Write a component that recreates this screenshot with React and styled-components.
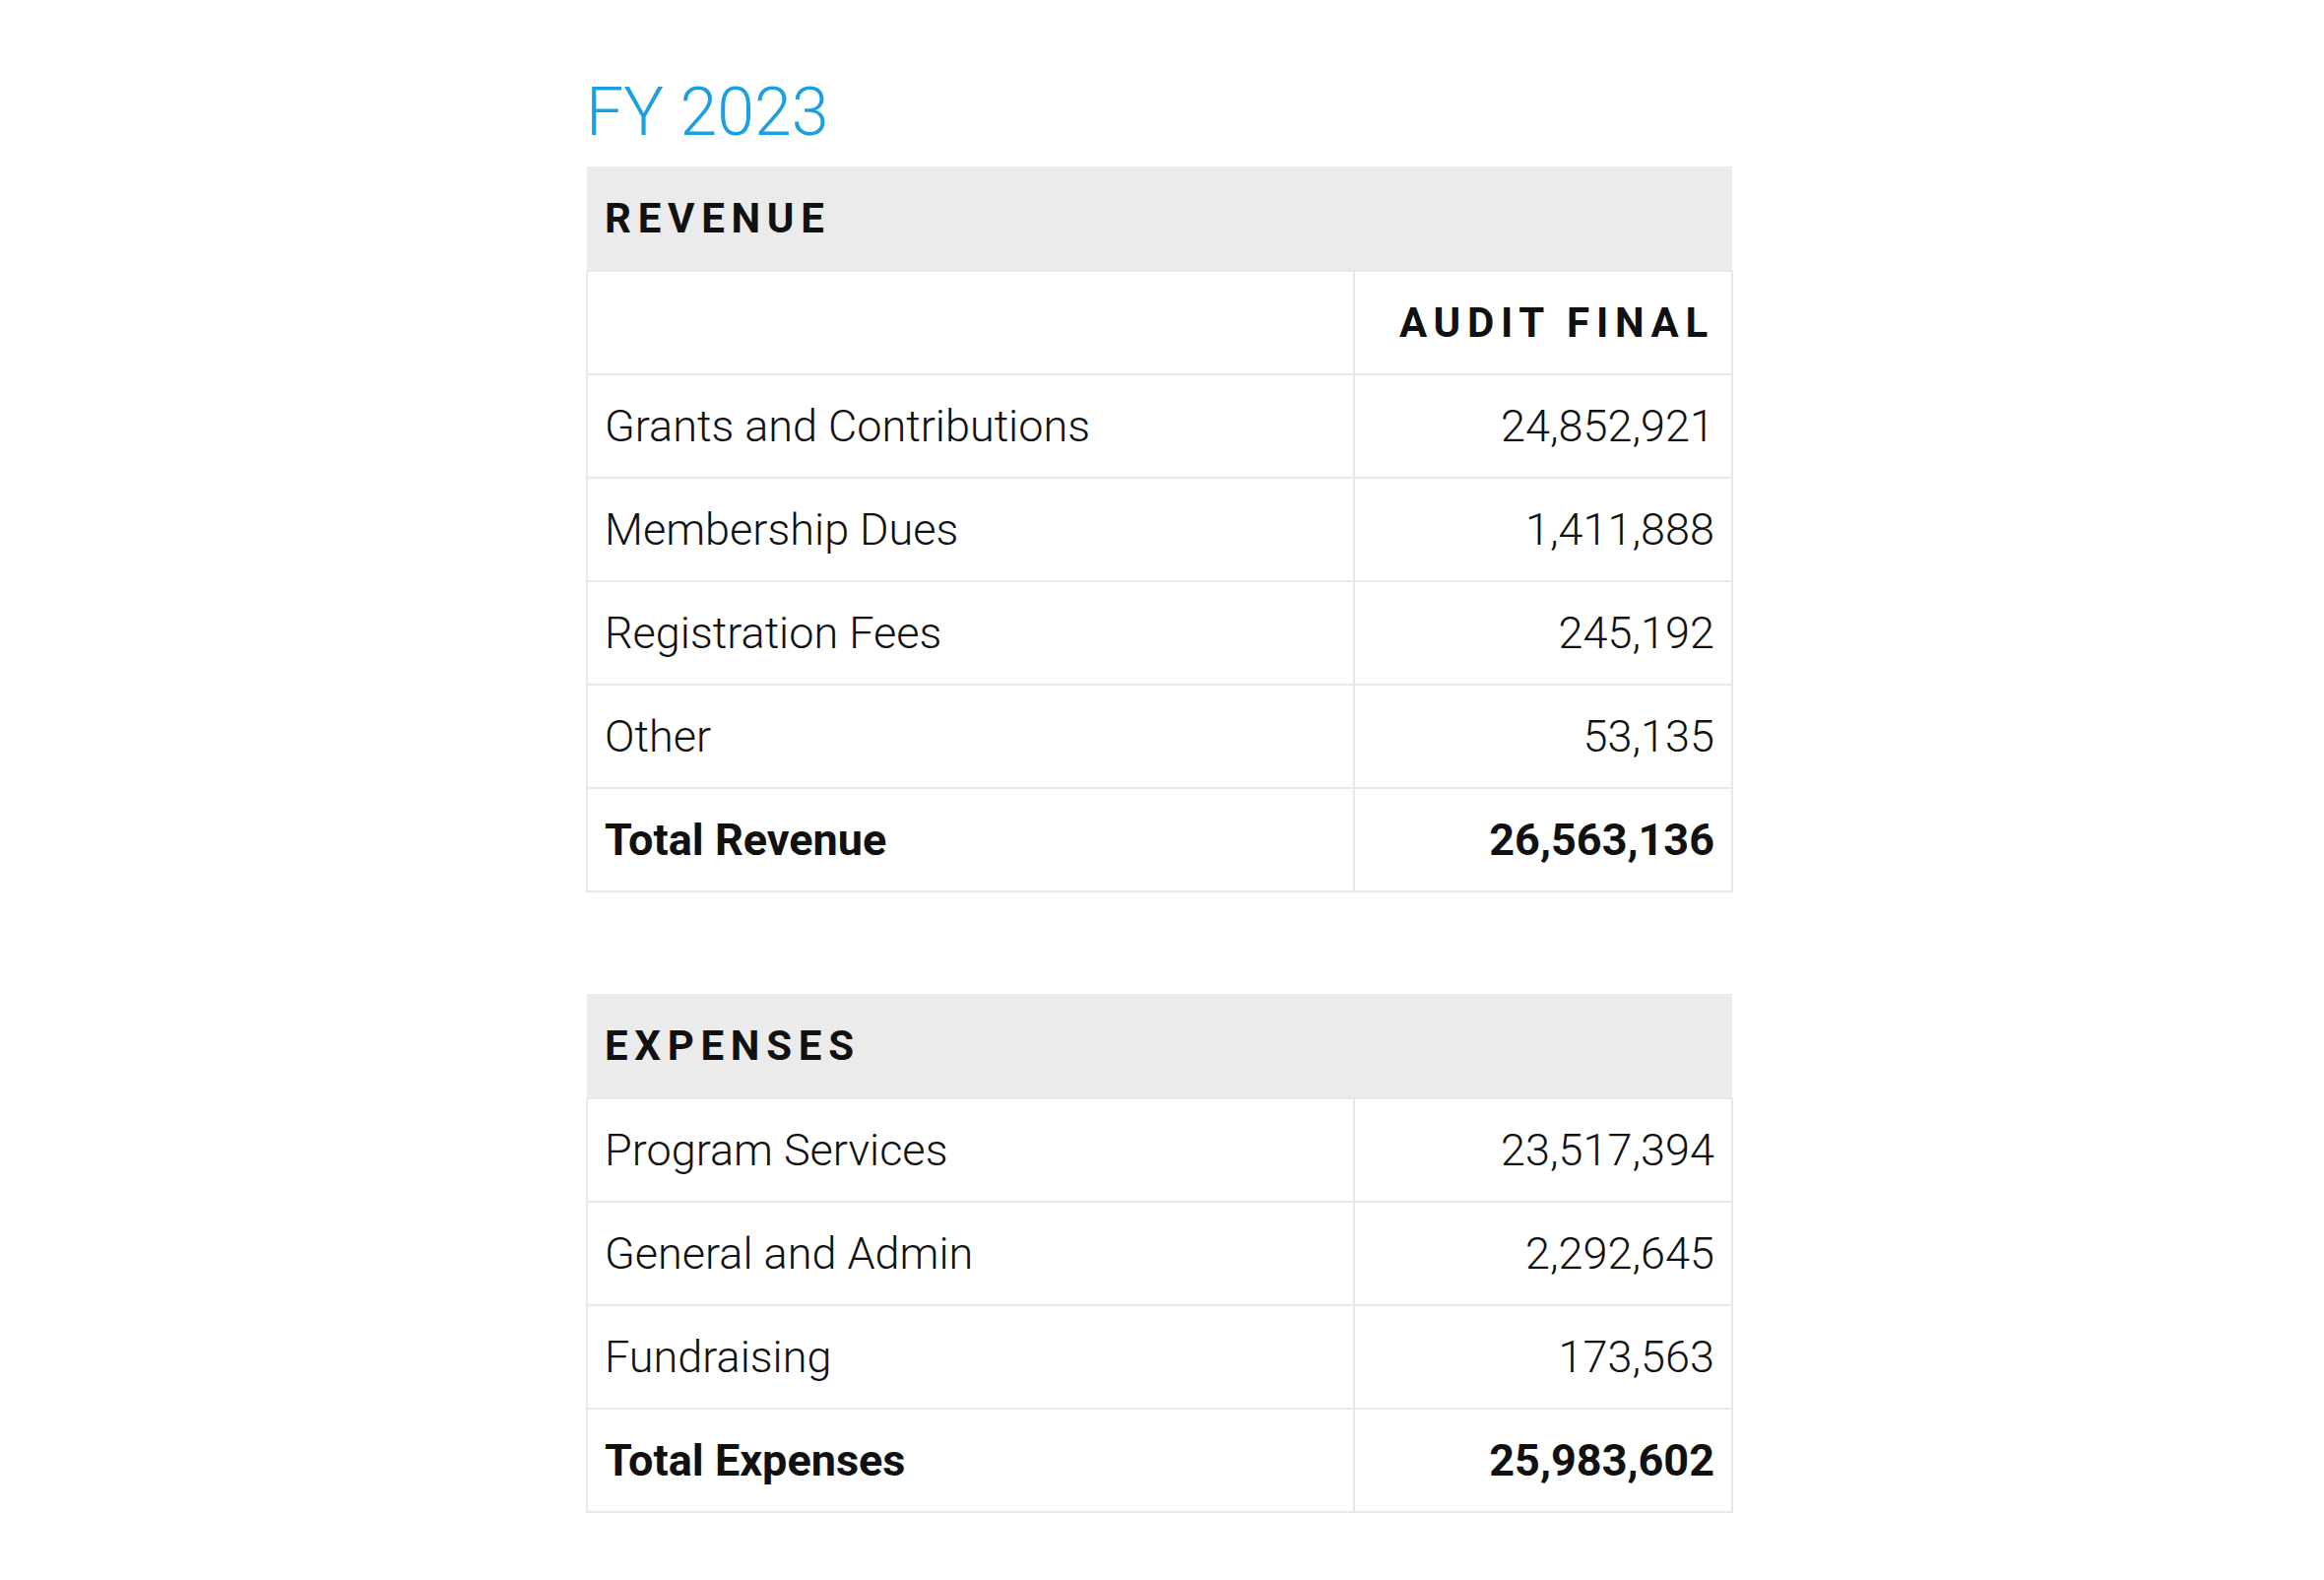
import styled, { createGlobalStyle } from 'styled-components';

const Global = createGlobalStyle`
  body {
    margin: 0;
    background: #fff;
    font-family: Roboto, "Liberation Sans", sans-serif;
  }
`;

const Page = styled.div`
  width: 1165px;
  margin-left: 595px;
  padding-top: 80px;
`;

const Title = styled.h1`
  margin: 0 0 21px;
  font-size: 68px;
  line-height: 68px;
  font-weight: 300;
  color: #1a9fe0;
`;

const Table = styled.table`
  width: 100%;
  border-collapse: collapse;
  margin-bottom: ${(p) => p.$gap || 0}px;
  table-layout: fixed;
`;

const SectionHead = styled.th`
  background: #ebebeb;
  height: 105px;
  padding: 0 18px;
  text-align: left;
  font-size: 42px;
  font-weight: 700;
  letter-spacing: 0.16em;
  color: #111;
`;

const Cell = styled.td`
  height: 103px;
  padding: 0 17px;
  border: 2px solid #e8e8e8;
  font-size: 45px;
  font-weight: ${(p) => (p.$bold ? 700 : 300)};
  color: #111;
  text-align: ${(p) => (p.$num ? 'right' : 'left')};
  letter-spacing: ${(p) => (p.$caps ? '0.16em' : '0')};
  ${(p) => p.$caps && 'font-size: 42px; font-weight: 700;'}
`;

const revenue = [
  ['Grants and Contributions', '24,852,921'],
  ['Membership Dues', '1,411,888'],
  ['Registration Fees', '245,192'],
  ['Other', '53,135'],
];

const expenses = [
  ['Program Services', '23,517,394'],
  ['General and Admin', '2,292,645'],
  ['Fundraising', '173,563'],
];

function Rows({ rows, total }) {
  return (
    <>
      {rows.map(([label, value]) => (
        <tr key={label}>
          <Cell>{label}</Cell>
          <Cell $num>{value}</Cell>
        </tr>
      ))}
      <tr>
        <Cell $bold>{total[0]}</Cell>
        <Cell $num $bold>{total[1]}</Cell>
      </tr>
    </>
  );
}

export default function App() {
  return (
    <Page>
      <Global />
      <Title>FY 2023</Title>
      <Table $gap={103}>
        <colgroup>
          <col style={{ width: 779 }} />
          <col />
        </colgroup>
        <thead>
          <tr>
            <SectionHead colSpan={2}>REVENUE</SectionHead>
          </tr>
        </thead>
        <tbody>
          <tr>
            <Cell />
            <Cell $num $caps>AUDIT FINAL</Cell>
          </tr>
          <Rows rows={revenue} total={['Total Revenue', '26,563,136']} />
        </tbody>
      </Table>
      <Table>
        <colgroup>
          <col style={{ width: 779 }} />
          <col />
        </colgroup>
        <thead>
          <tr>
            <SectionHead colSpan={2}>EXPENSES</SectionHead>
          </tr>
        </thead>
        <tbody>
          <Rows rows={expenses} total={['Total Expenses', '25,983,602']} />
        </tbody>
      </Table>
    </Page>
  );
}
